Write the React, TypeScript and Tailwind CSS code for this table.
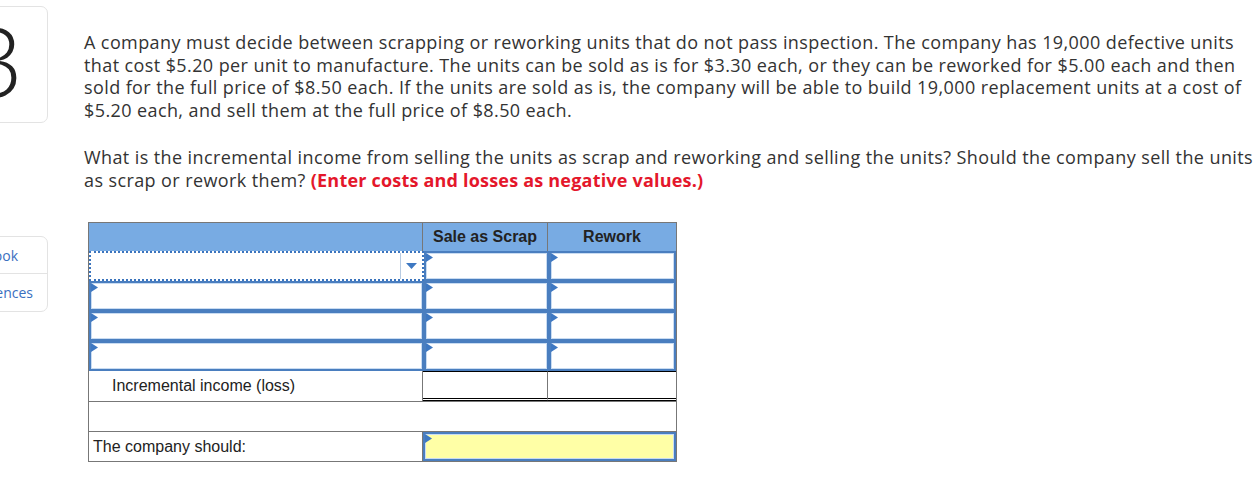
import React from "react";

const Tri = () => (
  <svg className="absolute left-0 top-0" width="7" height="9" viewBox="0 0 7 9">
    <polygon points="0,0 7,4.5 0,9" fill="#3e78c2" />
  </svg>
);

const InputCell = ({ w, tri = true, bg = "bg-white", extra = "" }: { w: string; tri?: boolean; bg?: string; extra?: string }) => (
  <div className={`relative ${w} h-full border-2 border-[#4a7ebf] ${bg} shadow-[inset_0_0_0_1px_#c9dcf2] ${extra}`}>
    {tri && <Tri />}
  </div>
);

export default function App() {
  const para = "whitespace-nowrap";
  return (
    <div className="w-[1260px] h-[504px] bg-white flex overflow-hidden" style={{ fontFamily: "'Open Sans', sans-serif" }}>
      {/* sidebar */}
      <div className="w-[48px] shrink-0 flex flex-col">
        <div className="mt-[6px] -ml-[14px] w-[62px] h-[117px] border border-[#e3e3e3] rounded-[7px] flex items-center justify-end overflow-hidden">
          <span className="text-[96px] leading-none text-[#222] font-light mr-[24px] -mt-[10px]" style={{ fontFamily: "'Open Sans', sans-serif" }}>3</span>
        </div>
        <div className="mt-[113px] -ml-[14px] w-[62px] h-[76px] border border-[#e3e3e3] rounded-[7px] flex flex-col text-[14px] text-[#3a6fc0]">
          <div className="h-[37px] flex items-center justify-end pr-[30px] border-b border-[#e3e3e3]">
            <span className="-mr-[1px]">Book</span>
          </div>
          <div className="flex-1 flex items-center justify-end pr-[14px]">
            <span>References</span>
          </div>
        </div>
      </div>

      {/* content */}
      <div className="ml-[36px] pt-[31px] text-[18px] tracking-[0.4px] leading-[22.7px] text-[#333]">
        <p className={para}>A company must decide between scrapping or reworking units that do not pass inspection. The company has 19,000 defective units</p>
        <p className={para}>that cost $5.20 per unit to manufacture. The units can be sold as is for $3.30 each, or they can be reworked for $5.00 each and then</p>
        <p className={para}>sold for the full price of $8.50 each. If the units are sold as is, the company will be able to build 19,000 replacement units at a cost of</p>
        <p className={para}>$5.20 each, and sell them at the full price of $8.50 each.</p>

        <div className="mt-[24px]">
          <p className={para}>What is the incremental income from selling the units as scrap and reworking and selling the units? Should the company sell the units</p>
          <p className={para}>
            as scrap or rework them?{" "}
            <span className="font-bold tracking-[0.2px] text-[#e4172b]">(Enter costs and losses as negative values.)</span>
          </p>
        </div>

        {/* table */}
        <div className="mt-[31px] ml-[4px] w-[589px] border border-[#777] text-[16px] tracking-normal text-[#222]" style={{ fontFamily: "'Liberation Sans', Arial, sans-serif" }}>
          {/* header */}
          <div className="flex h-[28px] bg-[#78abe3] font-bold">
            <div className="w-[334px] border-r border-[#777]" />
            <div className="w-[125px] border-r border-[#777] flex items-center justify-center">Sale as Scrap</div>
            <div className="flex-1 flex items-center justify-center">Rework</div>
          </div>
          {/* row 1 with dropdown */}
          <div className="flex h-[30px]">
            <div className="relative w-[335px] h-full border-2 border-dotted border-[#3b74bd] flex justify-end">
              <div className="w-[22px] h-full border-l border-[#b7cbe3] flex items-center justify-center">
                <svg width="11" height="6" viewBox="0 0 11 6"><polygon points="0,0 11,0 5.5,6" fill="#3e78c2" /></svg>
              </div>
            </div>
            <InputCell w="w-[125px]" />
            <InputCell w="flex-1" />
          </div>
          {[0, 1, 2].map((i) => (
            <div key={i} className="flex h-[30px]">
              <InputCell w="w-[335px]" />
              <InputCell w="w-[125px]" />
              <InputCell w="flex-1" />
            </div>
          ))}
          {/* incremental */}
          <div className="flex h-[31px] border-b border-[#777]">
            <div className="w-[334px] border-r border-[#777] flex items-center pl-[23px]">Incremental income (loss)</div>
            <div className="w-[125px] border-r border-[#777] border-t border-t-black border-b-[3px] border-b-black border-double" />
            <div className="flex-1 border-t border-t-black border-b-[3px] border-b-black border-double" />
          </div>
          {/* blank */}
          <div className="h-[30px] border-b border-[#777]" />
          {/* company should */}
          <div className="flex h-[29px]">
            <div className="w-[334px] border-r border-[#777] flex items-center pl-[4px] pt-[2px]">The company should:</div>
            <InputCell w="flex-1" bg="bg-[#ffffa6]" />
          </div>
        </div>
      </div>
    </div>
  );
}
